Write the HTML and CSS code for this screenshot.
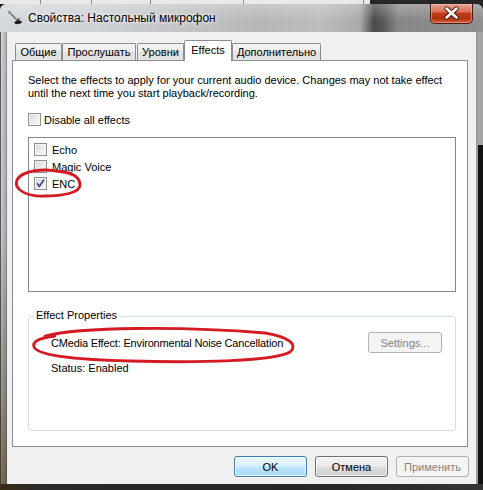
FILE: index.html
```html
<!DOCTYPE html>
<html lang="ru">
<head>
<meta charset="utf-8">
<title>Свойства: Настольный микрофон</title>
<link rel="stylesheet" href="styles.css">
</head>
<body>
<div class="screen">
  <div class="bgstrip"></div>
  <div class="window">
    <div class="titlebar">
      <svg class="appicon" width="16" height="16" viewBox="0 0 16 16">
        <path d="M2.5 2.5 L11 11" stroke="#6d6d6d" stroke-width="1.4" fill="none"/>
        <ellipse cx="2.6" cy="2.4" rx="1.8" ry="1.3" fill="#8a8a8a" transform="rotate(40 2.6 2.4)"/>
        <path d="M7 12.5 L10.5 10 L15 11.2 L14 13.6 L9 14.2 Z" fill="#1c1c1c"/>
        <path d="M10.5 10 L12.6 8.6" stroke="#3a3a3a" stroke-width="1.2"/>
      </svg>
      <span class="title">Свойства: Настольный микрофон</span>
      <div class="close">
        <svg width="43" height="20" viewBox="0 0 43 20">
          <path d="M16.5 5.5 L26.5 14.5 M26.5 5.5 L16.5 14.5" stroke="#4a130a" stroke-width="4.4" stroke-linecap="round" fill="none"/>
          <path d="M16.5 5.5 L26.5 14.5 M26.5 5.5 L16.5 14.5" stroke="#ffffff" stroke-width="2.6" stroke-linecap="round" fill="none"/>
        </svg>
      </div>
    </div>
    <div class="middle">
      <div class="frame-left"></div>
      <div class="client">
        <div class="tabs">
          <div class="tab t1">Общие</div>
          <div class="tab t2">Прослушать</div>
          <div class="tab t3">Уровни</div>
          <div class="tab active t4">Effects</div>
          <div class="tab t5">Дополнительно</div>
        </div>
        <div class="panel">
          <p class="desc">Select the effects to apply for your current audio device. Changes may not take effect<br>until the next time you start playback/recording.</p>
          <div class="chkrow">
            <span class="cb"></span><span>Disable all effects</span>
          </div>
          <div class="list">
            <div class="item"><span class="cb"></span><span>Echo</span></div>
            <div class="item"><span class="cb"></span><span>Magic Voice</span></div>
            <div class="item"><span class="cb checked"><svg width="9" height="9" viewBox="0 0 9 9"><path d="M1 4.2 L3.4 7.2 L8 0.8" stroke="#3b4f8c" stroke-width="1.8" fill="none"/></svg></span><span>ENC</span></div>
          </div>
          <div class="group">
            <span class="glabel">Effect Properties</span>
            <div class="grow">
              <span class="effname">CMedia Effect: Environmental Noise Cancellation</span>
              <button class="btn disabled settings">Settings...</button>
            </div>
            <div class="status">Status: Enabled</div>
          </div>
        </div>
        <div class="buttons">
          <button class="btn default">OK</button>
          <button class="btn">Отмена</button>
          <button class="btn disabled">Применить</button>
        </div>
      </div>
      <div class="frame-right"></div>
    </div>
    <div class="frame-bottom"></div>
  </div>
  <svg class="marks" width="483" height="490" viewBox="0 0 483 490">
    <path d="M62 172 C45 168, 22 170, 17 180 C13 190, 28 197, 45 196 C62 196, 80 193, 80 185 C80 177, 72 172, 55 171" stroke="#d41a22" stroke-width="2.8" fill="none" stroke-linecap="round"/>
    <path d="M45 336 C80 327, 180 326, 265 333 C290 337, 298 345, 290 352 C275 361, 200 363, 130 361 C80 360, 38 356, 34 347 C32 341, 40 338, 55 336" stroke="#d41a22" stroke-width="2.8" fill="none" stroke-linecap="round"/>
  </svg>
</div>
</body>
</html>
```
FILE: styles.css
```css
* { box-sizing: border-box; }

body {
  margin: 0;
  font-family: "Liberation Sans", Arial, sans-serif;
  font-size: 11px;
  color: #000;
  background: #1a1a1a;
}

.screen {
  position: relative;
  width: 483px;
  height: 490px;
  overflow: hidden;
}

.bgstrip {
  height: 4px;
  background: linear-gradient(90deg,
    #e9e9e9 0 40px, #8a8a8a 40px 41px,
    #e9e9e9 41px 91px, #8a8a8a 91px 92px,
    #e9e9e9 92px 150px, #8a8a8a 150px 151px,
    #e9e9e9 151px 243px, #8a8a8a 243px 244px,
    #e9e9e9 244px 363px, #8a8a8a 363px 364px,
    #e9e9e9 364px 370px, #262626 370px);
}

.window {
  display: flex;
  flex-direction: column;
  height: 486px;
}

.titlebar {
  height: 28px;
  display: flex;
  align-items: center;
  padding-left: 7px;
  background:
    linear-gradient(180deg, rgba(255,255,255,0.25), rgba(255,255,255,0) 60%),
    linear-gradient(90deg, #d3d8dd 0, #cdd1d5 90px, #c2c4c6 180px, #b7b7b7 260px, #bdbdbd 320px, #aaaaaa 360px, #4a4a4a 374px, #5c5c5c 384px, #878787 398px, #8f8f8f 483px);
  border-radius: 6px 6px 0 0;
}

.appicon { flex: none; }

.title {
  margin-left: 5px;
  font-size: 12px;
  color: #000;
  text-shadow: 0 0 6px rgba(255,255,255,0.9), 0 0 3px rgba(255,255,255,0.9);
}

.close {
  margin-left: auto;
  margin-right: 10px;
  align-self: flex-start;
  width: 43px;
  height: 20px;
  border: 1px solid #4a1a12;
  border-top: none;
  border-radius: 0 0 5px 5px;
  background: linear-gradient(180deg, #e6a593 0%, #d7735a 40%, #c03b1c 50%, #b1310f 75%, #d2603c 100%);
  box-shadow: inset 0 0 0 1px rgba(255,200,180,0.45);
}
.close svg { display: block; margin: -1px 0 0 -1px; }

.middle {
  display: flex;
  height: 452px;
}

.frame-left {
  width: 7px;
  background:
    linear-gradient(180deg, rgba(0,0,0,0) 0, rgba(0,0,0,0.05) 200px, rgba(40,30,10,0.35) 360px, rgba(60,40,10,0.6) 452px),
    linear-gradient(90deg, #5c5c5c 0 1px, #cdd1d5 1px 3px, #b5b9bd 3px 6px, #8d8d8d 6px 7px);
}

.frame-right {
  width: 7px;
  background:
    linear-gradient(90deg, #9a9a9a 0 2px, transparent 2px),
    linear-gradient(180deg, #a5a5a5 0 113px, #121212 113px);
}

.frame-bottom {
  height: 6px;
  background: linear-gradient(90deg, #3a2c18 0, #2a2a2a 40px, #252525 300px, #333 483px);
}

.client {
  width: 469px;
  background: #f0f0f0;
  display: flex;
  flex-direction: column;
}

.tabs {
  display: flex;
  align-items: flex-end;
  height: 21px;
  margin-top: 8px;
  padding-left: 8px;
  position: relative;
  z-index: 1;
}

.tab {
  height: 17px;
  margin-bottom: 1px;
  display: flex;
  align-items: center;
  justify-content: center;
  border: 1px solid #898c95;
  border-bottom: none;
  border-radius: 2px 2px 0 0;
  background: linear-gradient(180deg, #f4f4f4 0%, #ececec 45%, #e0e0e0 55%, #e4e4e4 100%);
  white-space: nowrap;
}
.t1 { width: 47px; }
.t2 { width: 74px; }
.t3 { width: 47px; margin-left: 1px; }
.t4 { width: 48px; }
.t5 { width: 89px; }

.tab.active {
  height: 21px;
  margin-bottom: 0;
  background: #fff;
  padding-bottom: 2px;
}

.panel {
  margin-top: -1px;
  margin-left: 5px;
  width: 456px;
  height: 387px;
  border: 1px solid #898c95;
  background: #fff;
  padding: 13px 0 0 15px;
}

.desc {
  margin: 0;
  line-height: 13px;
  white-space: nowrap;
}

.cb {
  flex: none;
  width: 13px;
  height: 13px;
  border: 1px solid #8e8f8f;
  background: linear-gradient(135deg, #d3d5d8 0%, #eeeeee 60%, #fbfbfb 100%);
  box-shadow: inset 0 0 0 1px #f4f4f4;
  display: flex;
  align-items: center;
  justify-content: center;
}

.chkrow {
  display: flex;
  align-items: center;
  gap: 3px;
  margin-top: 13px;
  height: 13px;
}

.list {
  margin-top: 11px;
  width: 428px;
  height: 155px;
  border: 1px solid #828790;
  padding: 3px 0 0 5px;
}

.item {
  height: 17px;
  display: flex;
  align-items: center;
  gap: 5px;
}

.group {
  margin-top: 24px;
  width: 428px;
  height: 115px;
  border: 1px solid #d5dfe5;
  border-radius: 3px;
}

.glabel {
  display: block;
  width: fit-content;
  margin: -8px 0 0 5px;
  padding: 0 2px;
  background: #fff;
  line-height: 13px;
}

.grow {
  display: flex;
  align-items: center;
  justify-content: space-between;
  margin-top: 10px;
  padding-left: 22px;
  padding-right: 13px;
}

.effname { letter-spacing: -0.17px; }

.status {
  margin-top: 9px;
  padding-left: 22px;
  line-height: 13px;
}

.buttons {
  display: flex;
  justify-content: flex-end;
  gap: 8px;
  margin-top: 9px;
  padding-right: 7px;
}

.btn {
  width: 73px;
  height: 21px;
  padding: 0;
  font-family: "Liberation Sans", Arial, sans-serif;
  font-size: 11px;
  color: #000;
  border: 1px solid #707070;
  border-radius: 3px;
  background: linear-gradient(180deg, #f2f2f2 0%, #ebebeb 48%, #dddddd 52%, #cfcfcf 100%);
  box-shadow: inset 0 0 0 1px rgba(255,255,255,0.7);
}

.btn.default {
  border-color: #3c7fb1;
  background: linear-gradient(180deg, #eaf6fd 0%, #d9f0fc 48%, #bee6fd 52%, #a7d9f5 100%);
  box-shadow: inset 0 0 0 1px rgba(255,255,255,0.8);
}

.btn.disabled {
  border-color: #adb2b5;
  background: #f4f4f4;
  color: #838383;
  box-shadow: none;
}

.btn.settings { width: 74px; }

.marks {
  position: absolute;
  top: 0;
  left: 0;
  pointer-events: none;
}
```
